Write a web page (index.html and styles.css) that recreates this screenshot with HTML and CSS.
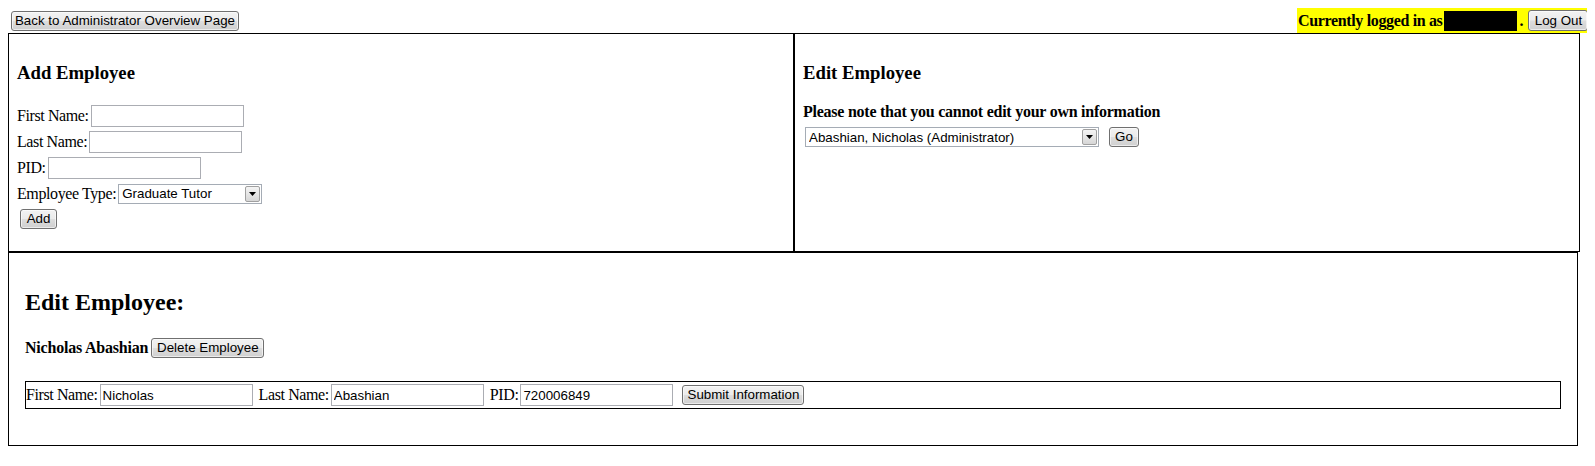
FILE: index.html
```html
<!DOCTYPE html>
<html>
<head>
<meta charset="utf-8">
<title>Employee Administration</title>
<link rel="stylesheet" href="styles.css">
</head>
<body>
<div class="topbar">
  <button class="btn back">Back to Administrator Overview Page</button>
  <div class="login"><span class="login-text">Currently logged in as</span><span class="redact"></span><span class="dot">.</span><button class="btn logout">Log Out</button></div>
</div>
<div class="panels">
  <section class="panel half">
    <h3 class="title">Add Employee</h3>
    <div class="row"><span class="lbl">First Name:</span><input class="txt" type="text"></div>
    <div class="row"><span class="lbl">Last Name:</span><input class="txt" type="text"></div>
    <div class="row"><span class="lbl">PID:</span><input class="txt" type="text"></div>
    <div class="row row-sel"><span class="lbl">Employee Type:</span><span class="sel sel-type"><select><option>Graduate Tutor</option></select><span class="arrow"><svg width="7" height="4" viewBox="0 0 7 4"><path d="M0 0H7L3.5 4Z" fill="#000"/></svg></span></span></div>
    <div class="row row-btn"><button class="btn add">Add</button></div>
  </section>
  <section class="panel half">
    <h3 class="title">Edit Employee</h3>
    <p class="note">Please note that you cannot edit your own information</p>
    <div class="pick"><span class="sel sel-emp"><select><option>Abashian, Nicholas (Administrator)</option></select><span class="arrow"><svg width="7" height="4" viewBox="0 0 7 4"><path d="M0 0H7L3.5 4Z" fill="#000"/></svg></span></span><button class="btn go">Go</button></div>
  </section>
</div>
<section class="panel detail">
  <h2 class="big">Edit Employee:</h2>
  <div class="namerow"><span class="name">Nicholas Abashian</span><button class="btn del">Delete Employee</button></div>
  <div class="infobox">
    <span class="lbl">First Name:</span><input class="txt" type="text" value="Nicholas">
    <span class="lbl gap">Last Name:</span><input class="txt" type="text" value="Abashian">
    <span class="lbl gap">PID:</span><input class="txt" type="text" value="720006849">
    <button class="btn submit">Submit Information</button>
  </div>
</section>
</body>
</html>
```
FILE: styles.css
```css
body {
  margin: 8px;
  background: #fff;
  color: #000;
  font-family: "Liberation Serif", "Times New Roman", serif;
  font-size: 16px;
}

.btn {
  box-sizing: border-box;
  flex-shrink: 0;
  height: 20px;
  padding: 0 2px;
  border: 1px solid #707070;
  border-radius: 3px;
  background: linear-gradient(to bottom, #f2f2f2 0%, #ebebeb 48%, #dddddd 52%, #cfcfcf 100%);
  box-shadow: inset 0 0 0 1px rgba(255, 255, 255, 0.6);
  font-family: "Liberation Sans", Arial, sans-serif;
  font-size: 13.33px;
  color: #000;
  line-height: 16px;
  white-space: nowrap;
  margin: 0;
}

.topbar {
  display: flex;
  justify-content: space-between;
  align-items: flex-start;
  height: 25px;
  margin-right: -3px;
}

.back {
  margin: 3px 0 0 3px;
  width: 228px;
}

.login {
  display: flex;
  align-items: center;
  flex-shrink: 0;
  height: 25px;
  width: 293px;
  box-sizing: border-box;
  padding-left: 1px;
  background: #ffff00;
  font-weight: bold;
  white-space: nowrap;
}

.login-text {
  letter-spacing: -0.35px;
}

.redact {
  display: inline-block;
  flex-shrink: 0;
  width: 73px;
  height: 20px;
  margin-left: 2px;
  background: #000;
}

.dot {
  margin-left: 2px;
}

.logout {
  margin-left: 5px;
  width: 60px;
  height: 21px;
}

.panels {
  display: flex;
}

.panel {
  box-sizing: border-box;
  border: 1px solid #000;
}

.half {
  width: 786px;
  height: 219px;
  padding: 8px;
}

.title {
  font-size: 18.72px;
  line-height: 22px;
  margin: 20px 0 19px;
}

.row {
  display: flex;
  align-items: center;
  height: 26px;
}

.row-sel,
.row-btn {
  height: 25px;
}

.lbl {
  letter-spacing: -0.4px;
  margin-right: 2px;
  white-space: nowrap;
}

.txt {
  box-sizing: border-box;
  flex-shrink: 0;
  width: 153px;
  height: 22px;
  margin: 0;
  padding: 0 2px;
  border: 1px solid #abadb3;
  font-family: "Liberation Sans", Arial, sans-serif;
  font-size: 13.33px;
  color: #000;
}

.sel {
  box-sizing: border-box;
  display: inline-flex;
  align-items: center;
  flex-shrink: 0;
  height: 20px;
  border: 1px solid #a5acb5;
  background: #fff;
}

.sel select {
  appearance: none;
  -webkit-appearance: none;
  flex: 1;
  min-width: 0;
  height: 18px;
  border: 0;
  margin: 0;
  padding: 0 3px;
  background: transparent;
  font-family: "Liberation Sans", Arial, sans-serif;
  font-size: 13.33px;
  color: #000;
  outline: none;
}

.sel-type {
  width: 144px;
}

.sel-emp {
  width: 294px;
  margin-left: 2px;
}

.arrow {
  box-sizing: border-box;
  display: flex;
  align-items: center;
  justify-content: center;
  width: 15px;
  height: 16px;
  margin-right: 1px;
  border: 1px solid #a0a0a0;
  border-radius: 2px;
  background: linear-gradient(to bottom, #f4f4f4 0%, #e6e6e6 50%, #d6d6d6 100%);
}

.add {
  margin-left: 3px;
  width: 37px;
}

.note {
  margin: 0;
  font-weight: bold;
  line-height: 18px;
  letter-spacing: -0.25px;
}

.pick {
  display: flex;
  align-items: center;
  margin-top: 6px;
}

.go {
  margin-left: 10px;
  width: 30px;
}

.detail {
  width: 1570px;
  height: 194px;
  padding: 16px;
}

.big {
  font-size: 24px;
  line-height: 28px;
  margin: 19px 0 22px;
}

.namerow {
  display: flex;
  align-items: center;
  height: 20px;
}

.name {
  font-weight: bold;
  letter-spacing: -0.2px;
}

.del {
  margin-left: 3px;
  width: 113px;
}

.infobox {
  box-sizing: border-box;
  display: flex;
  align-items: center;
  height: 28px;
  margin-top: 23px;
  border: 1px solid #000;
}

.infobox .gap {
  margin-left: 6px;
}

.submit {
  margin-left: 9px;
  width: 122px;
}
```
